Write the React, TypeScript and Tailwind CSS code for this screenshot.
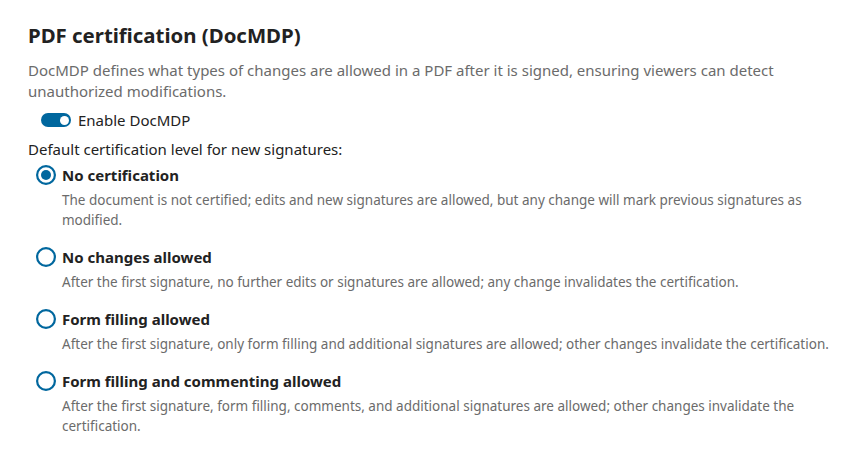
const levels = [
  {
    id: "none",
    label: "No certification",
    description:
      "The document is not certified; edits and new signatures are allowed, but any change will mark previous signatures as modified.",
  },
  {
    id: "no-changes",
    label: "No changes allowed",
    description:
      "After the first signature, no further edits or signatures are allowed; any change invalidates the certification.",
  },
  {
    id: "form-filling",
    label: "Form filling allowed",
    description:
      "After the first signature, only form filling and additional signatures are allowed; other changes invalidate the certification.",
  },
  {
    id: "form-commenting",
    label: "Form filling and commenting allowed",
    description:
      "After the first signature, form filling, comments, and additional signatures are allowed; other changes invalidate the certification.",
  },
]

function Radio({ checked }: { checked: boolean }) {
  return (
    <svg width="20" height="20" viewBox="0 0 20 20" className="shrink-0">
      <circle cx="10" cy="10" r="8.9" fill="none" stroke="#00679e" strokeWidth="2.2" />
      {checked && <circle cx="10" cy="10" r="5" fill="#00679e" />}
    </svg>
  )
}

export default function App() {
  const selected = "none"

  return (
    <div className="min-h-screen bg-white font-['Noto_Sans',sans-serif] text-[#222222]">
      <div className="pl-[28px] pr-[16px] pt-[20px]">
        <h2 className="text-[20.4px] font-bold leading-[30px]">PDF certification (DocMDP)</h2>
        <p className="mt-[10px] text-[15px] leading-[21px] text-[#6b6b6b]">
          DocMDP defines what types of changes are allowed in a PDF after it is signed, ensuring viewers can detect
          unauthorized modifications.
        </p>

        {/* Toggle */}
        <div className="mt-[8px] flex h-[20px] items-center gap-[7px] pl-[13px]">
          <span className="flex h-[14px] w-[30px] items-center justify-end rounded-full bg-[#00679e] px-[2px]">
            <span className="h-[9px] w-[9px] rounded-full bg-white" />
          </span>
          <span className="text-[15px]">Enable DocMDP</span>
        </div>

        <p className="mt-[9px] text-[15px] leading-[20px]">Default certification level for new signatures:</p>

        <div className="mt-[4px] flex flex-col gap-[15px]">
          {levels.map((level) => (
            <div key={level.id}>
              <label className="flex h-[24px] items-center gap-[6px] pl-[8px]">
                <Radio checked={level.id === selected} />
                <span className="text-[15px] font-bold">{level.label}</span>
              </label>
              <p className="mt-[3px] pl-[34px] text-[13.5px] leading-[20px] text-[#6b6b6b]">{level.description}</p>
            </div>
          ))}
        </div>
      </div>
    </div>
  )
}
